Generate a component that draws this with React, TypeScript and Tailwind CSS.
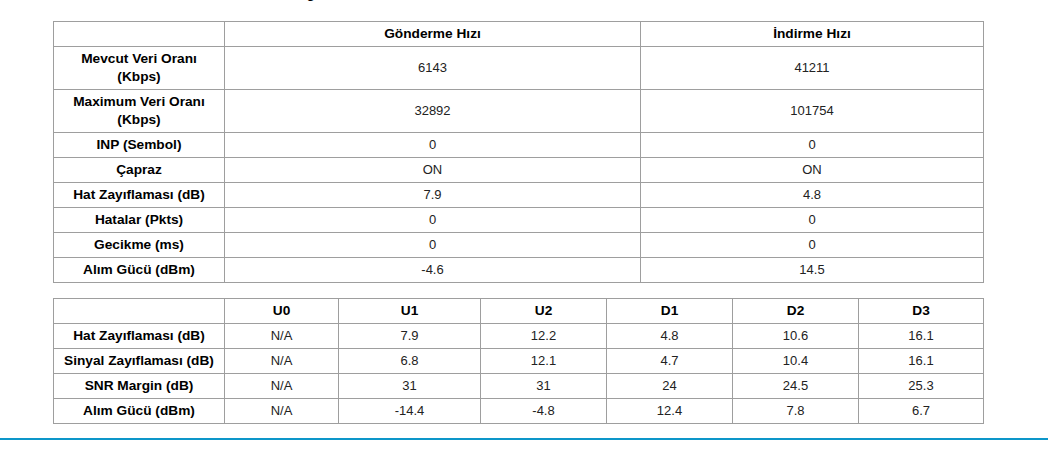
import React from "react";

const font = { fontFamily: '"Liberation Sans", Arial, sans-serif' };

const rows1: [string, string, string][] = [
  ["Mevcut Veri Oranı\n(Kbps)", "6143", "41211"],
  ["Maximum Veri Oranı\n(Kbps)", "32892", "101754"],
  ["INP (Sembol)", "0", "0"],
  ["Çapraz", "ON", "ON"],
  ["Hat Zayıflaması (dB)", "7.9", "4.8"],
  ["Hatalar (Pkts)", "0", "0"],
  ["Gecikme (ms)", "0", "0"],
  ["Alım Gücü (dBm)", "-4.6", "14.5"],
];

const rows2: string[][] = [
  ["Hat Zayıflaması (dB)", "N/A", "7.9", "12.2", "4.8", "10.6", "16.1"],
  ["Sinyal Zayıflaması (dB)", "N/A", "6.8", "12.1", "4.7", "10.4", "16.1"],
  ["SNR Margin (dB)", "N/A", "31", "31", "24", "24.5", "25.3"],
  ["Alım Gücü (dBm)", "N/A", "-14.4", "-4.8", "12.4", "7.8", "6.7"],
];

const th = "border border-[#9e9e9e] px-1 py-[3px] text-center font-bold text-[13.7px] text-black leading-[18px]";
const td = "border border-[#9e9e9e] px-1 py-[3px] text-center text-[13px] text-[#222] leading-[18px]";

export default function App() {
  return (
    <div className="w-[1048px] h-[450px] overflow-hidden bg-white text-[13px]" style={font}>
      <div className="mt-[-15px] h-[18px] pl-[249px] font-bold text-[13.7px] leading-[18px] text-black">VDSL Bilgisi</div>
      <div className="pt-[18px] pl-[53px]">
        <table className="table-fixed border-collapse w-[930px]">
          <colgroup>
            <col className="w-[171px]" />
            <col className="w-[416px]" />
            <col className="w-[343px]" />
          </colgroup>
          <thead>
            <tr>
              <th className={th}></th>
              <th className={th}>Gönderme Hızı</th>
              <th className={th}>İndirme Hızı</th>
            </tr>
          </thead>
          <tbody>
            {rows1.map((r, i) => (
              <tr key={i}>
                <td className={th + " whitespace-pre-line"}>{r[0]}</td>
                <td className={td}>{r[1]}</td>
                <td className={td}>{r[2]}</td>
              </tr>
            ))}
          </tbody>
        </table>
        <table className="table-fixed border-collapse w-[930px] mt-[15px]">
          <colgroup>
            <col className="w-[171px]" />
            <col className="w-[114px]" />
            <col className="w-[142px]" />
            <col className="w-[126px]" />
            <col className="w-[126px]" />
            <col className="w-[126px]" />
            <col className="w-[125px]" />
          </colgroup>
          <thead>
            <tr>
              <th className={th}></th>
              {["U0", "U1", "U2", "D1", "D2", "D3"].map((h) => (
                <th key={h} className={th}>{h}</th>
              ))}
            </tr>
          </thead>
          <tbody>
            {rows2.map((r, i) => (
              <tr key={i}>
                <td className={th}>{r[0]}</td>
                {r.slice(1).map((v, j) => (
                  <td key={j} className={td}>{v}</td>
                ))}
              </tr>
            ))}
          </tbody>
        </table>
      </div>
      <div className="mt-[14px] h-[2px] w-full bg-[#0d96c9]"></div>
    </div>
  );
}
